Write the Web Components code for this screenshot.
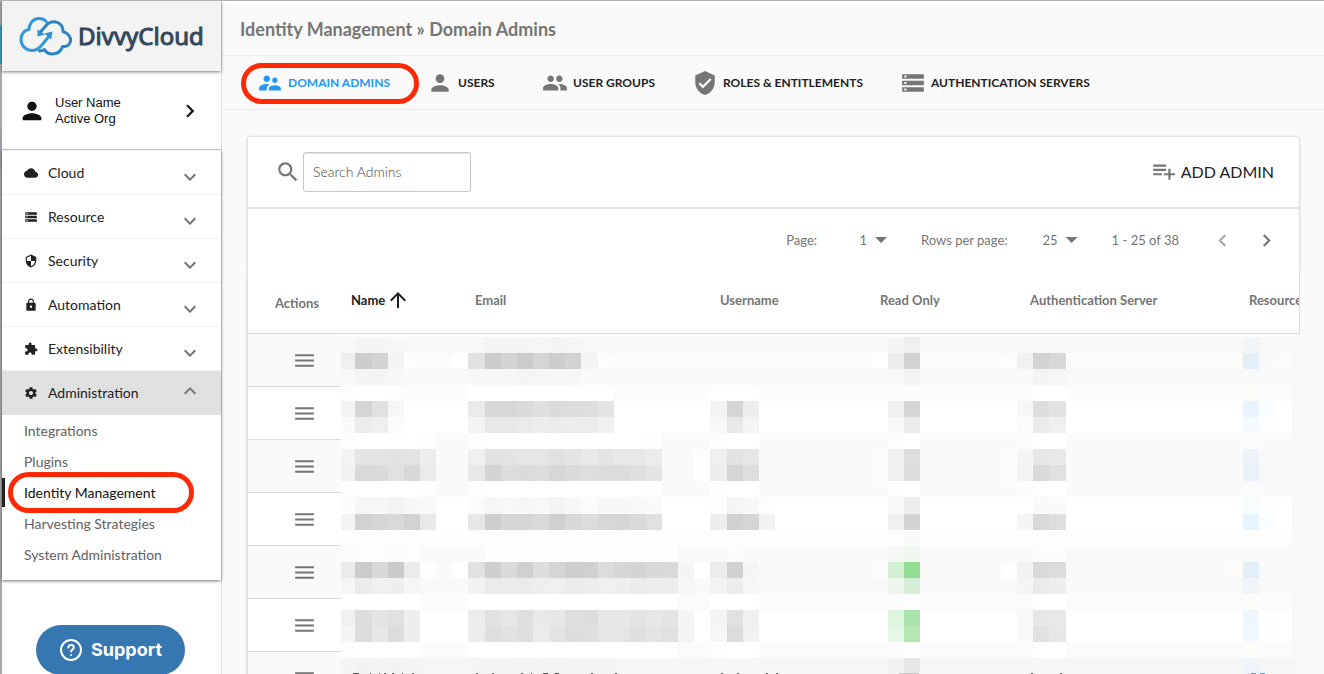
<!DOCTYPE html>
<html lang="en">
<head>
<meta charset="utf-8">
<title>Identity Management » Domain Admins</title>
<style>
  body { margin: 0; background: #fafafa; font-family: Lato, sans-serif; font-size: 14px; color: #212121; }
</style>
</head>
<body>
<app-shell>
  <side-nav slot="nav">
    <nav-group icon="cloud" label="Cloud"></nav-group>
    <nav-group icon="storage" label="Resource"></nav-group>
    <nav-group icon="security" label="Security"></nav-group>
    <nav-group icon="lock" label="Automation"></nav-group>
    <nav-group icon="extension" label="Extensibility"></nav-group>
    <nav-group icon="settings" label="Administration" open>
      <nav-link>Integrations</nav-link>
      <nav-link>Plugins</nav-link>
      <nav-link current>Identity Management</nav-link>
      <nav-link>Harvesting Strategies</nav-link>
      <nav-link>System Administration</nav-link>
    </nav-group>
  </side-nav>
  <page-title slot="title">Identity Management » Domain Admins</page-title>
  <tab-bar slot="tabs">
    <tab-link icon="supervisor" current>DOMAIN ADMINS</tab-link>
    <tab-link icon="person">USERS</tab-link>
    <tab-link icon="people">USER GROUPS</tab-link>
    <tab-link icon="verified">ROLES &amp; ENTITLEMENTS</tab-link>
    <tab-link icon="storage">AUTHENTICATION SERVERS</tab-link>
  </tab-bar>
  <admin-card></admin-card>
</app-shell>

<script>
const ICONS = {
  cloud: 'M19.35 10.04C18.67 6.59 15.64 4 12 4 9.11 4 6.6 5.64 5.35 8.04 2.34 8.36 0 10.91 0 14c0 3.31 2.69 6 6 6h13c2.76 0 5-2.24 5-5 0-2.64-2.05-4.78-4.65-4.96z',
  storage: 'M2 20h20v-4H2v4zm2-3h2v2H4v-2zM2 4v4h20V4H2zm4 3H4V5h2v2zm-4 7h20v-4H2v4zm2-3h2v2H4v-2z',
  security: 'M12 1L3 5v6c0 5.55 3.84 10.74 9 12 5.16-1.26 9-6.45 9-12V5l-9-4zm0 10.99h7c-.53 4.12-3.28 7.79-7 8.94V12H5V6.3l7-3.11v8.8z',
  lock: 'M18 8h-1V6c0-2.76-2.24-5-5-5S7 3.24 7 6v2H6c-1.1 0-2 .9-2 2v10c0 1.1.9 2 2 2h12c1.1 0 2-.9 2-2V10c0-1.1-.9-2-2-2zm-6 9c-1.1 0-2-.9-2-2s.9-2 2-2 2 .9 2 2-.9 2-2 2zm3.1-9H8.9V6c0-1.71 1.39-3.1 3.1-3.1 1.71 0 3.1 1.39 3.1 3.1v2z',
  extension: 'M20.5 11H19V7c0-1.1-.9-2-2-2h-4V3.5C13 2.12 11.88 1 10.5 1S8 2.12 8 3.5V5H4c-1.1 0-1.99.9-1.99 2v3.8H3.5c1.49 0 2.7 1.21 2.7 2.7s-1.21 2.7-2.7 2.7H2V20c0 1.1.9 2 2 2h3.8v-1.5c0-1.49 1.21-2.7 2.7-2.7 1.49 0 2.7 1.21 2.7 2.7V22H17c1.1 0 2-.9 2-2v-4h1.5c1.38 0 2.5-1.12 2.5-2.5S21.88 11 20.5 11z',
  settings: 'M19.43 12.98c.04-.32.07-.64.07-.98s-.03-.66-.07-.98l2.11-1.65c.19-.15.24-.42.12-.64l-2-3.46c-.12-.22-.39-.3-.61-.22l-2.49 1c-.52-.4-1.08-.73-1.69-.98l-.38-2.65C14.46 2.18 14.25 2 14 2h-4c-.25 0-.46.18-.49.42l-.38 2.65c-.61.25-1.17.59-1.69.98l-2.49-1c-.23-.09-.49 0-.61.22l-2 3.46c-.13.22-.07.49.12.64l2.11 1.65c-.04.32-.07.65-.07.98s.03.66.07.98l-2.11 1.65c-.19.15-.24.42-.12.64l2 3.46c.12.22.39.3.61.22l2.49-1c.52.4 1.08.73 1.69.98l.38 2.65c.03.24.24.42.49.42h4c.25 0 .46-.18.49-.42l.38-2.65c.61-.25 1.17-.59 1.69-.98l2.49 1c.23.09.49 0 .61-.22l2-3.46c.12-.22.07-.49-.12-.64l-2.11-1.65zM12 15.5c-1.93 0-3.5-1.57-3.5-3.5s1.57-3.5 3.5-3.5 3.5 1.57 3.5 3.5-1.57 3.5-3.5 3.5z',
  supervisor: 'M16.5 12c1.38 0 2.49-1.12 2.49-2.5S17.88 7 16.5 7C15.12 7 14 8.12 14 9.5s1.12 2.5 2.5 2.5zM9 11c1.66 0 2.99-1.34 2.99-3S10.66 5 9 5C7.34 5 6 6.34 6 8s1.34 3 3 3zm7.5 3c-1.83 0-5.5.92-5.5 2.75V19h11v-2.25c0-1.83-3.67-2.75-5.5-2.75zM9 13c-2.33 0-7 1.17-7 3.5V19h7v-2.25c0-.85.33-2.34 2.37-3.47C10.5 13.1 9.66 13 9 13z',
  person: 'M12 12c2.21 0 4-1.79 4-4s-1.79-4-4-4-4 1.79-4 4 1.79 4 4 4zm0 2c-2.67 0-8 1.34-8 4v2h16v-2c0-2.66-5.33-4-8-4z',
  people: 'M16 11c1.66 0 2.99-1.34 2.99-3S17.66 5 16 5c-1.66 0-3 1.34-3 3s1.34 3 3 3zm-8 0c1.66 0 2.99-1.34 2.99-3S9.66 5 8 5C6.34 5 5 6.34 5 8s1.34 3 3 3zm0 2c-2.33 0-7 1.17-7 3.5V19h14v-2.5c0-2.33-4.67-3.5-7-3.5zm8 0c-.29 0-.62.02-.97.05 1.16.84 1.97 1.97 1.97 3.45V19h6v-2.5c0-2.33-4.67-3.5-7-3.5z',
  verified: 'M12 1L3 5v6c0 5.55 3.84 10.74 9 12 5.16-1.26 9-6.45 9-12V5l-9-4zm-2 16l-4-4 1.41-1.41L10 14.17l6.59-6.59L18 9l-8 8z',
  search: 'M15.5 14h-.79l-.28-.27C15.41 12.59 16 11.11 16 9.5 16 5.91 13.09 3 9.5 3S3 5.91 3 9.5 5.91 16 9.5 16c1.61 0 3.09-.59 4.23-1.57l.27.28v.79l5 4.99L20.49 19l-4.99-5zm-6 0C7.01 14 5 11.99 5 9.5S7.01 5 9.5 5 14 7.01 14 9.5 11.99 14 9.5 14z',
  add: 'M14 10H2v2h12v-2zm0-4H2v2h12V6zm4 8v-4h-2v4h-4v2h4v4h2v-4h4v-2h-4zM2 16h8v-2H2v2z',
  up: 'M4 12l1.41 1.41L11 7.83V20h2V7.83l5.58 5.59L20 12l-8-8-8 8z',
  menu: 'M3 18h18v-2H3v2zm0-5h18v-2H3v2zm0-7v2h18V6H3z',
  left: 'M15.41 7.41L14 6l-6 6 6 6 1.41-1.41L10.83 12z',
  right: 'M10 6L8.59 7.41 13.17 12l-4.58 4.59L10 18l6-6z',
  more: 'M16.59 8.59L12 13.17 7.41 8.59 6 10l6 6 6-6z',
  less: 'M12 8l-6 6 1.41 1.41L12 10.83l4.59 4.58L18 14z'
};
const icon = (name, size, extra = '') =>
  `<svg width="${size}" height="${size}" viewBox="0 0 24 24" fill="currentColor" aria-hidden="true" ${extra}><path d="${ICONS[name]}"/></svg>`;

function define(name, render) {
  customElements.define(name, class extends HTMLElement {
    connectedCallback() {
      if (this.shadowRoot) return;
      this.attachShadow({ mode: 'open' }).innerHTML =
        '<style>*{box-sizing:border-box} svg{display:block;flex:none} button,select,input{font:inherit;color:inherit;margin:0}</style>' + render(this);
    }
  });
}

define('app-shell', () => `
<style>
  :host { display: grid; grid-template-columns: 2px 220px minmax(0, 1fr); height: 100vh; overflow: hidden; border-top: 1px solid #b1b1b1; box-sizing: border-box; }
  .edge { background: linear-gradient(#a8a8a8 24px, #3a9dba 24px 63px, #a8a8a8 63px 128px, #9c9ca8 128px 168px, #a8a8a8 168px); }
  main { border-top: 3px solid #fff; }
  .body { padding: 27px 25px 0 26px; }
</style>
<div class="edge"></div>
<slot name="nav"></slot>
<main>
  <slot name="title"></slot>
  <slot name="tabs"></slot>
  <div class="body"><slot></slot></div>
</main>`);

define('brand-logo', () => `
<style>
  :host { display: flex; align-items: center; gap: 6px; height: 70px; padding-left: 17px; box-sizing: border-box; background: #f3f3f3; box-shadow: 0 1px 3px rgba(0,0,0,.5); position: relative; }
  span { font-family: "Noto Sans", sans-serif; font-size: 24px; line-height: 36px; color: #33475b; -webkit-text-stroke: 1px #33475b; }
</style>
<svg width="53" height="40" viewBox="0 0 53 40" fill="none" stroke-width="3" stroke-linecap="round" stroke-linejoin="round" aria-label="DivvyCloud">
  <path stroke="#3498d6" d="M27.500 6 C24 1 14 .5 10.500 10 C10 11 10.500 13 10 13.500 C5 14 2 18.500 2 23.500 C2 30 7 34.500 13 34.500 C17 34.500 20 32.500 22.500 29.500 L31 19"/>
  <path stroke="#2b85c3" d="M21 16.500 L28 8.500 C34 3 44 6 44 15.500 C49 17 52 21 51.500 25 C51 29 47.500 31 43.500 30.500 C41 39.500 29 40 25.500 33.500 C24 34.500 22.500 35 20.500 35"/>
  <path fill="#2f8fcd" stroke="none" d="M18.500 13.500 L18.500 20.500 L26 18.500Z M25.500 17.500 L33.500 15.500 L32 23.500Z"/>
</svg>
<span>DivvyCloud</span>`);

define('side-nav', () => `
<style>
  :host { display: flex; flex-direction: column; background: #fff; border-right: 1px solid #dcdcdc; }
  .user { display: flex; align-items: center; width: 100%; height: 79px; padding: 2px 18px 0 16px; border: 0; border-bottom: 1px solid #d8d8d8; background: none; text-align: left; color: #111; }
  .user span { flex: 1; margin-left: 9px; font-family: "Liberation Sans", sans-serif; font-size: 13px; line-height: 16px; }
  nav { padding-bottom: 10px; box-shadow: 0 1px 3px rgba(0,0,0,.55); }
  .support { display: flex; align-items: center; align-self: flex-start; gap: 8px; flex: none; height: 50px; margin: 45px 0 0 34px; padding: 0 23px; border: 0; border-radius: 25px; background: #3677b1; color: #fff; font: 700 18px/24px Inter, sans-serif; }
</style>
<brand-logo></brand-logo>
<button class="user">${icon('person', 28)}<span>User Name<br>Active Org</span>${icon('right', 26)}</button>
<nav><slot></slot></nav>
<button class="support">
  <svg width="24" height="24" viewBox="0 0 24 24" fill="none" stroke="#fff" stroke-width="2" stroke-linecap="round" aria-hidden="true"><circle cx="12" cy="12" r="10"/><path d="M9.300 9.500c.2-1.700 1.400-2.500 2.800-2.500 1.500 0 2.700 1 2.700 2.400 0 2.100-2.700 2.200-2.700 4.100M12.100 17v.1"/></svg>
  Support
</button>`);

define('nav-group', el => `
<style>
  :host { display: block; }
  button { display: flex; align-items: center; width: 100%; height: 44px; padding: 0 19px 0 22px; border: 0; border-top: 1px solid #f0f0f0; background: none; text-align: left; line-height: 20px; }
  :host([open]) button { background: #e0e0e0; height: 45px; }
  button span { flex: 1; margin-left: 10px; }
  .more { margin-top: 8px; color: #757575; }
  .less { margin-bottom: 4px; color: #757575; }
</style>
<button aria-expanded="${el.hasAttribute('open')}">${icon(el.getAttribute('icon'), 14)}<span>${el.getAttribute('label')}</span>
${el.hasAttribute('open') ? icon('less', 24, 'class="less"') : icon('more', 24, 'class="more"')}</button>
<slot></slot>`);

const ring = 'position:absolute; border:5px solid #ff2a05; border-radius:21px; pointer-events:none;';

define('nav-link', el => `
<style>
  :host { display: block; position: relative; }
  a { display: block; padding: 0 22px; line-height: 31px; color: #616161; text-decoration: none; }
  :host([current]) a { color: #111; }
  :host([current]) a::before { content: ""; position: absolute; left: 0; top: 1px; bottom: 1px; width: 3px; background: #212121; }
  :host([current]) a::after { content: ""; ${ring} inset: -5px 27px -5px 6px; }
</style>
<a href="#"><slot></slot></a>`);

define('page-title', () => `
<style>
  :host { display: block; border-bottom: 1px solid #ececec; }
  h1 { margin: 0; padding: 0 18px; font-size: 18px; line-height: 51px; font-weight: 700; color: #757575; }
</style>
<h1><slot></slot></h1>`);

define('tab-bar', () => `
<style>
  :host { display: block; border-bottom: 1px solid #ececec; }
  nav { display: flex; gap: 37px; height: 53px; align-items: center; padding-left: 35px; }
</style>
<nav><slot></slot></nav>`);

define('tab-link', el => `
<style>
  :host { display: block; position: relative; min-width: 78px; flex: none; }
  a { display: flex; align-items: center; gap: 5px; font-size: 12px; line-height: 20px; font-weight: 700; color: #212121; text-decoration: none; white-space: nowrap; }
  svg { color: #757575; }
  :host([current]) a, :host([current]) svg { color: #2196f3; }
  :host([current]) a::after { content: ""; ${ring} inset: -7px -29px -8px -16px; }
</style>
<a href="#">${icon(el.getAttribute('icon'), 26)}<slot></slot></a>`);

define('admin-card', () => `
<style>
  :host { display: block; position: relative; }
  .top { background: #fff; border-radius: 2px 2px 0 0; box-shadow: 0 0 3px rgba(0,0,0,.3); clip-path: inset(-4px -4px 0 -4px); }
  .tools { display: flex; align-items: center; height: 72px; padding: 0 25px 0 27px; border-bottom: 2px solid #e0e0e0; }
  .tools > svg, .add svg { color: #757575; }
  input { width: 168px; height: 40px; margin-left: 2px; padding: 0 9px 2px; border: 1px solid #c8c8c8; border-radius: 3px; background: #fff; box-shadow: inset 0 1px 1px rgba(0,0,0,.1); font-weight: 300; color: #333; }
  input::placeholder { color: #444; opacity: 1; }
  .add { display: flex; align-items: center; gap: 4px; margin-left: auto; padding: 0 0 2px; border: 0; background: none; font-size: 16px; }
</style>
<div class="top">
  <div class="tools">
    ${icon('search', 26)}
    <input type="search" placeholder="Search Admins" aria-label="Search Admins">
    <button class="add">${icon('add', 26)}ADD ADMIN</button>
  </div>
  <table-pager></table-pager>
</div>
<admin-table></admin-table>`);

define('table-pager', () => `
<style>
  :host { display: flex; align-items: center; justify-content: flex-end; height: 63px; padding: 0 11px 1px 0; box-sizing: border-box; font-size: 13px; color: #757575; line-height: 20px; }
  select { appearance: none; border: 0; background: none; padding: 0; text-align: right; text-align-last: right; width: 50px; }
  .caret { width: 12px; height: 6px; margin: 0 34px 0 8px; background: #757575; clip-path: polygon(0 0, 100% 0, 50% 100%); }
  button { display: grid; place-items: center; width: 44px; height: 44px; padding: 0; border: 0; background: none; }
  button:disabled { color: #a6a6a6; }
  .range { margin-right: 21px; }
</style>
<label for="page">Page:</label>
<select id="page"><option>1</option></select><span class="caret"></span>
<label for="rows">Rows per page:</label>
<select id="rows"><option>25</option></select><span class="caret"></span>
<span class="range">1 - 25 of 38</span>
<button disabled aria-label="Previous page">${icon('left', 25)}</button>
<button aria-label="Next page">${icon('right', 25)}</button>`);

define('admin-table', () => `
<style>
  :host { display: block; position: relative; }
  .scroll { overflow: hidden; box-shadow: 0 0 3px rgba(0,0,0,.3); clip-path: inset(0 0 0 -4px); }
  table { width: 1160px; table-layout: fixed; border-collapse: separate; border-spacing: 0; }
  th { height: 62px; padding: 0 0 5px 10px; border-bottom: 1px solid #dcdcdc; background: #fff; text-align: left; font-size: 13px; line-height: 20px; font-weight: 700; color: #757575; white-space: nowrap; }
  th:first-child { padding: 0 0 0 27px; }
  th.sorted { color: #212121; }
  th.sorted span { display: flex; align-items: center; gap: 1px; }
  td { height: 53px; padding: 0; border-bottom: 1px solid #dcdcdc; background: #fff; }
  tr:nth-child(odd) td { background: #fafafa; }
  td button { display: block; margin-left: 44px; padding: 0; border: 0; background: none; color: #757575; }
  redacted-cells { position: absolute; left: 93px; right: -3px; top: 62px; }
  .edge { position: absolute; right: -1px; top: 0; width: 1px; height: 62px; background: #dedede; }
</style>
<div class="scroll">
<table>
  <colgroup><col style="width:93px"><col style="width:124px"><col style="width:245px"><col style="width:160px"><col style="width:150px"><col style="width:219px"><col></colgroup>
  <thead><tr><th>Actions</th><th class="sorted" aria-sort="ascending"><span>Name ${icon('up', 24)}</span></th><th>Email</th><th>Username</th><th>Read Only</th><th>Authentication Server</th><th>Resources</th></tr></thead>
  <tbody>${`<tr><td><button aria-label="Row actions">${icon('menu', 25)}</button></td><td></td><td></td><td></td><td></td><td></td><td></td></tr>`.repeat(7)}</tbody>
</table>
</div>
<div class="edge"></div>
<redacted-cells></redacted-cells>`);

/* Pixelated cells: one line per 16px band, "base | column:shade shade ...". */
const BANDS = `
f8|1:f5 f5 f7|8:f8 f5 f5 f5 f6 f4 f6|34:f5 ef|56:f3f6f9
fb|0:ef cd d3 f3 fd|7:ff e2 cb d4 cb d5 cd d3 f4 fd|33:ff ec d3|41:fd f1 d3 d8|55:fdfbf8 e2eff9 f7f9fb
f9|0:f8 f5 f5 f7|8:f7 f7 f7 f5 f6 f6 f7|34:f8 f4|43:f4 f6
fc|0:fd ff ff fd|8:ff ff ff ff ff ff ff ff ff|23:ff ff ff|43:ff ff|56:fefcf9
ff|0:f3 d5 e0 f6|8:ea d7 d7 da df db dc de e4|23:f3 d5 ee|34:ef d5|42:f7 dd e2|56:e8f3fd fafdff
ff|0:fa ec ef fb|8:f4 e8 e8 ea ed eb ec ec f0|23:f8 e8 f4|34:f8 ea|42:fb eb ef|56:f5faff fcfeff
fa|0:fd ff ff ff ff fd|8:fd ff ff ff ff ff ff ff ff ff ff fe|23:fd ff ff|34:fd ff|42:fc ff ff|56:fdfbf9
fa|0:f3 e4 e4 e2 e4 ee|8:f0 e2 e3 e5 e5 e1 e4 e9 e4 e8 e8 ec|22:fd f0 e2 e6|33:fc f0 de|41:fc f5 e7 e9|56:ecf3fb f7f8fa
fa|0:f2 d9 da e0 d8 eb|8:e8 d4 dd db dd d7 db de dc dc df e4|22:fd ee d5 de|33:fc ef dc|41:fc f3 da e0|56:e9f1fa f7f8fa
fa|0:fd ff ff ff ff fd|8:fd ff ff ff ff ff ff ff ff ff ff fe|23:fd ff ff|34:fd ff|42:fc ff ff|56:fdfbf9
ff|0:fc f6 f6 f3 f7 f9|8:fb f6 f8 f6 f8 f4 f7 fb f7 f7 f9 fa|23:fd f5 f7 fd|34:f9 ee|43:f9 fa|56:f7fcff fcfeff
ff|0:f3 d2 d6 d9 d2 e8|8:e7 ce d6 d6 d9 d0 d8 dc d7 d6 da e0|23:ee d1 d5 f2|34:ef d4|42:f5 d9 de|56:e6f4ff fafdff
fd|35:fcf9fe
f9|0:fb fd fd fb fd|9:fe fe fe fd fd fe fe fe fe fd fe fe|24:fc|34:f5f9f5 eff7ef|43:fc fc
fa|0:ea cb d8 ca eb fe|7:ff e1 cf da d0 dd d5 ce d0 dc d6 d4 d8 d9 f5 ff ec d1 f5|33:fefbfe d3efd4 92dc92 f7f9f6|41:fe f2 d9 dc|55:fdfbf8 e2eff9 f7f9fb
f9|0:f6 eb f0 ee f6|8:f2 ea eb eb ee ef eb ed ef ee eb ed ed f7|23:f3 ec f6|34:edf5ec d5efd6|42:f5 ea ee|56:f1f5f9
fb|0:ff ff ff ff ff|8:ff ff ff ff ff ff ff ff ff ff ff ff ff|23:ff ff ff|34:fdfbfe ff|43:ff ff|56:fefcf9
ff|0:f1 dd e3 e0 ee|8:ec e1 e6 df e9 e7 df dd e7 e7 e4 e7 e4 f5|23:f5 e1 f0|34:def5df a8e4a9|42:f9 e6 e8|56:eef6fe fcfeff
ff|0:f5 dc e6 dd ee|8:ec de e2 df ea e3 dd df e5 e5 df e4 e1 f3|23:f6 dc f1|34:e4f7e4 b3e8b3|42:f9 e2 e7|56:f1f8ff fcfeff
fb|0:fd ff ff ff ff|8:ff ff ff ff ff ff ff ff ff ff ff ff ff|23:fd ff ff|34:fdfbfe ff|43:ff ff|56:fefcf9
f6|0:f5 f2 f4 f2 f4|8:f5 f4 f4 f3 f4 f3 f4 f4 f4|34:f2 e7|56:eef4f9`.trim().split('\n');

define('redacted-cells', () => {
  const x = c => c < 1 ? 0 : Math.round(14.4 + 16.14 * (c - 1));
  const y = r => 3 + 16 * r + (r > 10 ? 1 : 0);
  const hex = s => '#' + (s.length === 2 ? s.repeat(3) : s);
  const rect = (l, t, w, h, f) => `<rect x="${l}" y="${t}" width="${w}" height="${h}" fill="${f}"/>`;
  let out = rect(0, 0, 951, 3, '#fdfdfd');
  BANDS.forEach((band, r) => {
    const [base, ...runs] = band.split('|');
    const h = y(r + 1) - y(r);
    out += rect(0, y(r), 951, h, hex(base)) + rect(951, y(r), 10, h, '#f8f8f8');
    runs.forEach(run => {
      const [start, shades] = run.split(':');
      shades.split(' ').forEach((s, i) => { const c = +start + i; out += rect(x(c), y(r), x(c + 1) - x(c), h, hex(s)); });
    });
  });
  /* tops of the first line of uncovered cell content */
  [[12,6],[29,1],[38,1],[43,2],[51,2],[61,1],[71,2],[135,2],[151,2],[180,2],[190,1],[202,5],[214,4],[250,2],[274,2],[380,2],[396,2],[425,2],[435,2],[690,2],[719,2]]
    .forEach(([l, w]) => out += rect(l, 339, w, 1, '#555'));
  out += rect(558, 339, 20, 1, '#c4c4c4') + rect(910, 339, 5, 1, '#4b9fe0') + rect(919, 339, 5, 1, '#4b9fe0');
  return `<style>:host { display: block; overflow: hidden; }</style>
    <svg width="961" height="340" viewBox="0 0 961 340" shape-rendering="crispEdges" aria-hidden="true">${out}</svg>`;
});
</script>
</body>
</html>
